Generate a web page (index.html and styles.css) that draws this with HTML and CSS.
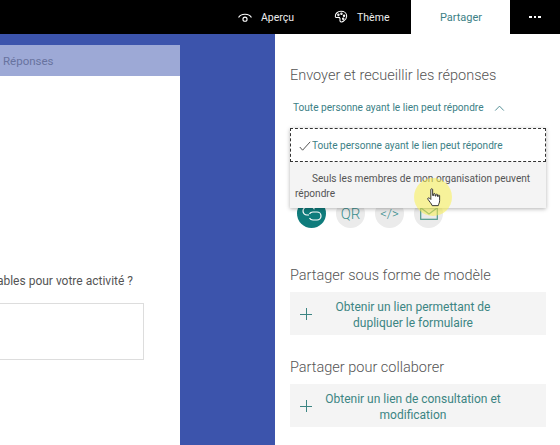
FILE: index.html
```html
<!DOCTYPE html>
<html lang="fr">
<head>
    <meta charset="UTF-8">
    <meta name="viewport" content="width=device-width, initial-scale=1.0">
    <title>Partager</title>
    <link rel="stylesheet" href="styles.css">
</head>
<body>
    <header class="topbar">
        <div class="top-item preview">
            <svg class="top-icon" width="16" height="12" viewBox="0 0 18 14" fill="none" stroke="#fff" stroke-width="1.3">
                <path d="M1.5 7.5C4 2.5 14 2.5 16.5 7.5"/>
                <circle cx="9" cy="9.500" r="2.400"/>
            </svg>
            <span>Aperçu</span>
        </div>
        <div class="top-item theme">
            <svg class="top-icon" width="14" height="14" viewBox="0 0 16 16" fill="none" stroke="#fff" stroke-width="1.200">
                <path d="M8 1.500C4.200 1.500 1.500 4 1.500 7c0 1.300 1 1.800 2 1.600 1.500-.3 3-.3 3.300 1 .3 1.200-.3 2.200.2 3.200.6 1.200 2.500 1 4-.2 2-1.500 3.500-3.600 3.500-5.600 0-3.200-2.800-5.500-6.500-5.500z"/>
                <circle cx="5" cy="5.500" r=".8"/>
                <circle cx="8.500" cy="4.300" r=".8"/>
                <circle cx="11.500" cy="6.500" r=".8"/>
                <circle cx="10.500" cy="10" r=".8"/>
            </svg>
            <span>Thème</span>
        </div>
        <div class="top-tab">Partager</div>
        <div class="top-more">
            <i></i><i></i><i></i>
        </div>
    </header>

    <div class="main">
        <section class="canvas">
            <div class="card">
                <div class="card-tab"><span>Réponses</span></div>
                <div class="card-body">
                    <p class="question">ables pour votre activité ?</p>
                    <div class="answer"></div>
                </div>
            </div>
        </section>

        <aside class="panel">
            <h2 class="panel-title first">Envoyer et recueillir les réponses</h2>
            <div class="scope">
                <span>Toute personne ayant le lien peut répondre</span>
                <svg width="11" height="6" viewBox="0 0 12 7" fill="none" stroke="#3c7f86" stroke-width="1">
                    <path d="M1 6.500L6 1.300l5 5.200"/>
                </svg>
            </div>

            <div class="scope-menu">
                <div class="option selected">
                    <svg width="12" height="10" viewBox="0 0 12 10" fill="none" stroke="#555" stroke-width="1">
                        <path d="M.8 6l2.800 3.200L11.200.8"/>
                    </svg>
                    <span>Toute personne ayant le lien peut répondre</span>
                </div>
                <div class="option hovered">Seuls les membres de mon organisation peuvent répondre</div>
                <div class="click-halo"></div>
                <svg class="cursor" width="16" height="19" viewBox="0 0 17 21">
                    <path d="M5 1.800c0-1.300 2-1.300 2 0v6.500l1 .1V6.800c0-1 1.700-1 1.700 0v2l1 .1V7.500c0-1 1.700-1 1.700 0v1.800l.8.1V8.500c0-1 1.500-1 1.500 0v5.500c0 2.500-1 3.200-1.500 5.500H6.500C5.500 17 3.500 15 1.800 12.500c-.8-1.200.7-2.200 1.700-1.300L5 12.700z" fill="#fff" stroke="#222" stroke-width="1"/>
                </svg>
            </div>

            <div class="share-row">
                <div class="share-btn active">
                    <svg width="20" height="15" viewBox="0 0 20 15" fill="none" stroke="#fff" stroke-width="1.200">
                        <path d="M7 9H5a4 4 0 0 1 0-8h4a4 4 0 0 1 3.500 2.200"/>
                        <path d="M7.500 7.800A4 4 0 0 1 11 6h4a4 4 0 0 1 0 8h-4a4 4 0 0 1-3.500-2"/>
                    </svg>
                </div>
                <div class="share-btn qr">QR</div>
                <div class="share-btn code">&lt;/&gt;</div>
                <div class="share-btn">
                    <svg width="18" height="13" viewBox="0 0 18 13" fill="none" stroke="#4f9a8a" stroke-width="1.200">
                        <rect x=".7" y=".7" width="16.600" height="11.600"/>
                        <path d="M.7.700L9 7l8.300-6.300"/>
                    </svg>
                </div>
            </div>

            <h2 class="panel-title">Partager sous forme de modèle</h2>
            <div class="action">
                <span class="plus"></span>
                <span class="action-text">Obtenir un lien permettant de dupliquer le formulaire</span>
            </div>

            <h2 class="panel-title collab">Partager pour collaborer</h2>
            <div class="action">
                <span class="plus"></span>
                <span class="action-text">Obtenir un lien de consultation et modification</span>
            </div>
        </aside>
    </div>
</body>
</html>
```

FILE: styles.css
```css
* {
    box-sizing: border-box;
}

html, body {
    height: 100%;
}

body {
    margin: 0;
    overflow: hidden;
    font-family: 'Roboto', 'Open Sans', sans-serif;
    background: #fff;
    color: #555;
    display: flex;
    flex-direction: column;
}

.topbar {
    height: 34px;
    flex: none;
    background: #000;
    color: #eee;
    display: flex;
    align-items: center;
    font-size: 10.500px;
}

.top-item {
    display: flex;
    align-items: center;
    gap: 8px;
}

.preview {
    margin-left: 237px;
}

.theme {
    margin-left: 40px;
    gap: 9px;
}

.top-tab {
    margin-left: 22px;
    width: 99px;
    height: 34px;
    background: #fff;
    color: #3c7f86;
    display: flex;
    align-items: center;
    justify-content: center;
    font-size: 11px;
}

.top-more {
    flex: 1;
    display: flex;
    justify-content: center;
    gap: 2px;
}

.top-more i {
    width: 2.500px;
    height: 2.500px;
    background: #fff;
}

.main {
    flex: 1;
    display: flex;
    min-height: 0;
}

.canvas {
    width: 275px;
    background: #3c54ac;
    padding-top: 11px;
}

.card {
    width: 180px;
    height: 100%;
    display: flex;
    flex-direction: column;
}

.card-tab {
    height: 31px;
    background: #9da9d6;
    color: #68739f;
    font-size: 11.500px;
    display: flex;
    align-items: center;
    padding-left: 3px;
}

.card-body {
    flex: 1;
    background: #fff;
    overflow: hidden;
    padding-top: 197px;
}

.question {
    margin: 0 0 14px;
    font-size: 12px;
    line-height: 16px;
    color: #555;
    white-space: nowrap;
    width: 133px;
    display: flex;
    justify-content: flex-end;
}

.answer {
    width: 144px;
    height: 57px;
    background: #fff;
    border: 1px solid #ddd;
    border-left: none;
}

.panel {
    flex: 1;
    padding: 0 14px 0 15px;
    position: relative;
}

.panel-title {
    margin: 0;
    font-size: 14.500px;
    font-weight: 300;
    line-height: 20px;
    color: #555;
}

.first {
    margin-top: 32px;
}

.collab {
    margin-top: 23px;
}

.scope {
    margin: 15px 0 0 3px;
    display: flex;
    align-items: center;
    gap: 10px;
    font-size: 10.100px;
    line-height: 14px;
    color: #3c7f86;
}

.scope-menu {
    position: relative;
    margin-top: 13px;
    height: 80px;
    z-index: 2;
    background: #f4f4f4;
    box-shadow: 0 1px 4px rgba(0, 0, 0, 0.3);
    font-size: 10.100px;
}

.option.selected {
    height: 34px;
    background: #fff;
    border: 1px dashed #333;
    color: #3c7f86;
    display: flex;
    align-items: center;
    gap: 1px;
    padding: 1px 0 0 8px;
}

.option.hovered {
    padding: 9px 8px 0 5px;
    text-indent: 17px;
    line-height: 15px;
    color: #555;
}

.click-halo {
    position: absolute;
    left: 124px;
    top: 50px;
    width: 38px;
    height: 38px;
    border-radius: 50%;
    background: rgba(250, 240, 80, 0.55);
}

.cursor {
    position: absolute;
    left: 136px;
    top: 60px;
}

.share-row {
    display: flex;
    gap: 10px;
    margin: -9px 0 0 7px;
    height: 67px;
}

.share-btn {
    width: 29px;
    height: 29px;
    border-radius: 50%;
    background: #ebebeb;
    color: #3c8f8f;
    font-size: 13px;
    font-weight: 300;
    display: flex;
    align-items: center;
    justify-content: center;
}

.share-btn.qr {
    font-size: 15px;
}

.share-btn.active {
    background: #0f7c7c;
}

.action {
    height: 43px;
    margin-top: 6px;
    background: #f4f4f4;
    color: #3c8583;
    font-size: 12px;
    line-height: 16px;
    display: flex;
    align-items: center;
}

.plus {
    flex: none;
    width: 12px;
    height: 12px;
    margin: 1px 0 0 10px;
    background:
        linear-gradient(#3c8583, #3c8583) center / 100% 1px no-repeat,
        linear-gradient(#3c8583, #3c8583) center / 1px 100% no-repeat;
}

.action-text {
    flex: 1;
    text-align: center;
    padding: 2px 42px 0 10px;
}
```
